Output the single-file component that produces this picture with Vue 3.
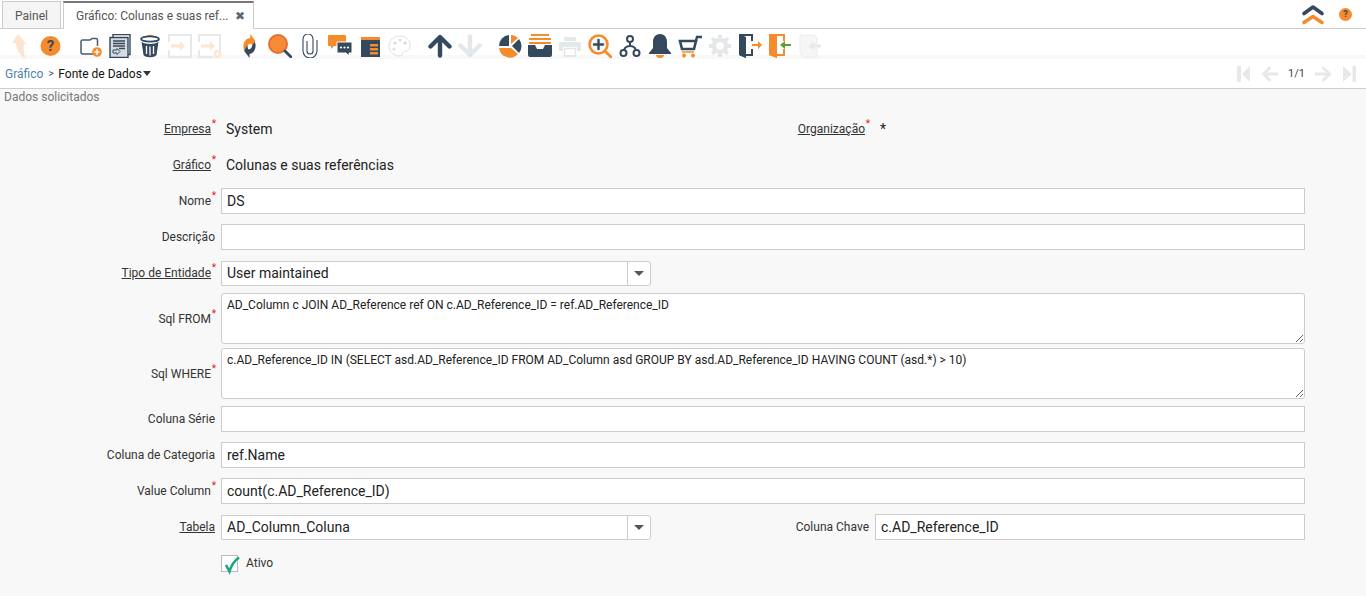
<script setup>
const dk = '#34495e'
const or = '#f68b2c'
const sqlFrom = 'AD_Column c JOIN AD_Reference ref ON c.AD_Reference_ID = ref.AD_Reference_ID'
const sqlWhere = 'c.AD_Reference_ID IN (SELECT asd.AD_Reference_ID FROM AD_Column asd GROUP BY asd.AD_Reference_ID HAVING COUNT (asd.*) > 10)'
const rows = [
  { label: 'Nome', req: true, value: 'DS' },
  { label: 'Descrição', value: '' },
]
const rows2 = [
  { label: 'Coluna Série', value: '' },
  { label: 'Coluna de Categoria', value: 'ref.Name' },
  { label: 'Value Column', req: true, value: 'count(c.AD_Reference_ID)' },
]
</script>

<template>
  <div class="page">
    <header class="tabs">
      <div class="tab">Painel</div>
      <div class="tab active">Gráfico: Colunas e suas ref...<span class="close">✖</span></div>
      <div class="tabs-right">
        <svg width="24" height="21" viewBox="0 0 24 21"><path d="M3 9.500 12 3l9 6.500" fill="none" stroke="#34495e" stroke-width="3.600" stroke-linecap="round" stroke-linejoin="round"/><path d="M3 18.500 12 12.500l9 6" fill="none" stroke="#f68b2c" stroke-width="3.600" stroke-linecap="round" stroke-linejoin="round"/></svg>
        <span class="mini-help">?</span>
      </div>
    </header>
    <div class="toolbar">
      <div class="tgroup">
        <span class="ti off"><svg viewBox="0 0 24 24"><path d="M10 0 4 9h4c0 6 3 11 9 15-1-5-2-10-1-14l3 1z" :fill="or"/></svg></span>
        <span class="ti"><svg viewBox="0 0 24 24"><circle cx="12.500" cy="12" r="10" :fill="or"/><text x="12.500" y="17" text-anchor="middle" class="qmark">?</text></svg></span>
      </div>
      <div class="tgroup">
        <span class="ti"><svg viewBox="0 0 24 24"><path d="M15 20H4.500A1.500 1.500 0 0 1 3 18.500V7.500A1.500 1.500 0 0 1 4.500 6H12l2-1.500h4a1.500 1.500 0 0 1 1.500 1.500V12" fill="none" stroke="#4a5a6c" stroke-width="1.500"/><circle cx="19" cy="18" r="4.800" :fill="or"/><path d="M16.300 18h5.400M19 15.300v5.400" stroke="#fff" stroke-width="1.500"/></svg></span>
        <span class="ti"><svg viewBox="0 0 24 24"><path d="M5 .5h17v20H5z" fill="#fff" :stroke="dk" stroke-width="1.400"/><path d="M2 3.500h18v20H2z" fill="#d8dbde" :stroke="dk" stroke-width="1.400"/><path d="M5 7h12M5 9.500h12M5 12h12M11 14.500h6" :stroke="dk" stroke-width="1.300"/><path d="M5 16h4v-1.500l3 3-3 3V19H5z" fill="none" :stroke="dk"/></svg></span>
        <span class="ti"><svg viewBox="0 0 24 24"><path d="M8.500 4c0-3 7-3 7 0" fill="none" :stroke="or" stroke-width="1.800"/><ellipse cx="12" cy="5" rx="9" ry="2.600" fill="#fff" :stroke="dk" stroke-width="1.800"/><path d="M3.500 8l2 13c2 3 11 3 13 0l2-13c-4 2.500-13 2.500-17 0z" :fill="dk"/><path d="M8.500 12v8M12 12.500v9M15.500 12v8" stroke="#fff" stroke-width="1.300"/></svg></span>
        <span class="ti"><svg viewBox="0 0 24 24"><path d="M1 8V1h22v22H1v-7" fill="none" stroke="#e6e8ea" stroke-width="2"/><path d="M3 10.500h9V7l5 5-5 5v-3.500H3z" fill="#fde6d2"/></svg></span>
        <span class="ti"><svg viewBox="0 0 24 24"><path d="M1 8V1h21v16M15 23H1v-7" fill="none" stroke="#e6e8ea" stroke-width="2"/><path d="M3 10.500h9V7l5 5-5 5v-3.500H3z" fill="#fde6d2"/><circle cx="19.500" cy="20" r="4" fill="#fde6d2"/><path d="M17.500 20h4M19.500 18v4" stroke="#fff"/></svg></span>
      </div>
      <div class="tgroup">
        <span class="ti"><svg viewBox="0 0 24 24"><g transform="translate(2.500 0) scale(.75 1)"><path d="M4 14C3 7 9 4 13 4V0l7 7-4 7-1-4c-3-1-6 1-7 4l-3 4z" :fill="or"/><path d="M20 10c1 7-5 10-8 10v4l-7-7 4-6 1 4c3 1 5-1 6-4l3-3z" :fill="dk"/></g></svg></span>
        <span class="ti"><svg viewBox="0 0 24 24"><circle cx="10" cy="10" r="9" fill="#f68b3a" stroke="#e5702c" stroke-width="2"/><path d="M17 17l6 6" :stroke="dk" stroke-width="2.800" stroke-linecap="round"/></svg></span>
        <span class="ti"><svg viewBox="0 0 24 24"><path d="M19 6v11a7 7 0 0 1-14 0V5a5 5 0 0 1 10 0v12a3 3 0 0 1-6 0V7" fill="#fff" :stroke="dk" stroke-width="1.100"/></svg></span>
        <span class="ti"><svg viewBox="0 0 24 24"><path d="M0 2a1 1 0 0 1 1-1h16a1 1 0 0 1 1 1v9a1 1 0 0 1-1 1H6l-3 3v-3H1a1 1 0 0 1-1-1z" :fill="or"/><path d="M9 8h15v11h-3v3l-3-3H9z" :fill="dk" stroke="#fff"/><circle cx="13" cy="13.500" r="1.100" fill="#fff"/><circle cx="16.500" cy="13.500" r="1.100" fill="#fff"/><circle cx="20" cy="13.500" r="1.100" fill="#fff"/></svg></span>
        <span class="ti"><svg viewBox="0 0 24 24"><path d="M3 5h19v18H3z" :fill="dk"/><path d="M3 3h19v3H3z" :fill="or"/><path d="M12 10h8v2.500h-8zM12 14h8v2.500h-8zM12 18h8v2.500h-8z" :fill="or"/></svg></span>
        <span class="ti off3"><svg viewBox="0 0 24 24"><path d="M12 2C5 2 1 7 1 12s4 10 11 10c3 0 2-3 3-4s6 0 7-5c1-6-4-11-10-11z" fill="#fff" stroke="#c8ccd0"/><circle cx="7" cy="9" r="1.500" fill="#c8b8a8"/><circle cx="12" cy="6" r="1.500" fill="#c8ccd0"/><circle cx="17" cy="9" r="1.500" fill="#c8b8a8"/><circle cx="6" cy="15" r="1.500" fill="#c8ccd0"/></svg></span>
      </div>
      <div class="tgroup">
        <span class="ti"><svg viewBox="0 0 24 24"><path d="M12 21.500V4M2.500 12.500 12 3l9.500 9.500" fill="none" :stroke="dk" stroke-width="4.400" stroke-linecap="round" stroke-linejoin="round"/></svg></span>
        <span class="ti off4"><svg viewBox="0 0 24 24"><path d="M12 2.500V20M2.500 11.500 12 21l9.500-9.500" fill="none" :stroke="dk" stroke-width="4.400" stroke-linecap="round" stroke-linejoin="round"/></svg></span>
      </div>
      <div class="tgroup">
        <span class="ti"><svg viewBox="0 0 24 24"><path d="M11 1A11 11 0 0 0 1 12h10z" :fill="dk"/><path d="M13 1v9l7-6a11 11 0 0 0-7-3z" :fill="or"/><path d="M21 5l-7 7 7 7a11 11 0 0 0 0-14z" :fill="dk"/><path d="M1 14a11 11 0 0 0 19 6l-7-6z" :fill="or"/></svg></span>
        <span class="ti"><svg viewBox="0 0 24 24"><path d="M3 0h18v2H3zM1 4h22v2H1z" :fill="or"/><path d="M1 8h22v2H1z" :fill="or"/><path d="M0 11h7l2 4h6l2-4h7v10a2 2 0 0 1-2 2H2a2 2 0 0 1-2-2z" :fill="dk"/></svg></span>
        <span class="ti off4"><svg viewBox="0 0 24 24"><path d="M6 3h12v4H6zM2 8h20a1 1 0 0 1 1 1v8h-4v-4H5v4H1V9a1 1 0 0 1 1-1z" :fill="dk"/><path d="M6.500 14.500h11V22h-11z" fill="none" :stroke="dk" stroke-width="1.500"/></svg></span>
        <span class="ti"><svg viewBox="0 0 24 24"><circle cx="10.500" cy="10.500" r="9" fill="#f5f6f7" :stroke="or" stroke-width="2.600"/><path d="M6 10.500h9M10.500 6v9" :stroke="dk" stroke-width="2.400" stroke-linecap="round"/><path d="M17 17l6 6" :stroke="or" stroke-width="2.800" stroke-linecap="round"/></svg></span>
        <span class="ti"><svg viewBox="0 0 24 24"><g fill="none" :stroke="dk" stroke-width="2"><circle cx="12" cy="5" r="3"/><circle cx="5.500" cy="19" r="3"/><circle cx="18.500" cy="19" r="3"/><path d="M12 8v4M12 12c-3 0-5 1.500-6 4M12 12c3 0 5 1.500 6 4"/></g></svg></span>
        <span class="ti"><svg viewBox="0 0 24 24"><path d="M12 0c-5 0-7 4-7 8v6l-4 5v1h22v-1l-4-5V8c0-4-2-8-7-8z" :fill="dk"/><path d="M8 21h8a4 3 0 0 1-8 0z" :fill="or"/></svg></span>
        <span class="ti"><svg viewBox="0 0 24 24"><path d="M2 7h16l-2 8H4z" fill="none" :stroke="dk" stroke-width="2.600"/><path d="M17.500 8l1.500-5h5" fill="none" :stroke="dk" stroke-width="2.400"/><path d="M4 18h12" :stroke="or" stroke-width="1.500"/><circle cx="6" cy="21.500" r="2" :fill="or"/><circle cx="15" cy="21.500" r="2" :fill="or"/></svg></span>
        <span class="ti off4"><svg viewBox="0 0 24 24"><circle cx="12" cy="12" r="6" fill="none" :stroke="dk" stroke-width="4.500"/><path d="M12 1v5M12 18v5M1 12h5M18 12h5M4.200 4.200l3.500 3.500M16.300 16.300l3.500 3.500M4.200 19.800l3.500-3.500M16.300 7.700l3.500-3.500" :stroke="dk" stroke-width="4"/></svg></span>
        <span class="ti"><svg viewBox="0 0 24 24"><path d="M1 0h14v7h-2V2H6v18h7v-5h2v7H8v2l-7-3z" :fill="dk"/><path d="M1 0l7 3v21l-7-3z" :fill="dk"/><path d="M14 10h6V7l4 4-4 4v-3h-6z" :fill="or"/></svg></span>
        <span class="ti"><svg viewBox="0 0 24 24"><path d="M1 0h16v7h-2V2H9v18h6v-5h2v7H9v2l-8-3z" :fill="or"/><path d="M1 0l8 3v21l-8-3z" :fill="or"/><path d="M23 10h-6V7l-5 4 5 4v-3h6z" fill="#5aa02c"/></svg></span>
        <span class="ti"><svg viewBox="0 0 24 24"><path d="M2 1h14l3 3v6h-7v4h7v9H6l-4-4z" fill="#f6f6f6" stroke="#ececec"/><path d="M23 10.500h-7V8l-5 4 5 4v-2.500h7z" fill="#e6e8ea"/></svg></span>
      </div>
    </div>
    <div class="crumb">
      <a class="link">Gráfico</a>
      <span class="sep">&gt;</span>
      <span class="cur">Fonte de Dados</span>
      <span class="caret"></span>
      <div class="pager">
        <svg width="13" height="18" viewBox="0 0 13 18"><path d="M0 1h4v16H0zM13 1v16L5 9z" fill="#e6e8ea"/></svg>
        <svg class="gap-a" width="17" height="18" viewBox="0 0 17 18"><path d="M17 9H3M9.500 2 2.500 9l7 7" fill="none" stroke="#e6e8ea" stroke-width="3"/></svg>
        <span class="count">1/1</span>
        <svg width="17" height="18" viewBox="0 0 17 18"><path d="M0 9h14M7.500 2l7 7-7 7" fill="none" stroke="#e6e8ea" stroke-width="3"/></svg>
        <svg class="gap-a" width="13" height="18" viewBox="0 0 13 18"><path d="M0 1v16l9-8zM9.500 1H13v16H9.500z" fill="#e6e8ea"/></svg>
      </div>
    </div>
    <div class="status">Dados solicitados</div>
    <main class="form">
      <label class="lbl u req">Empresa<i>*</i></label>
      <div class="val">System</div>
      <label class="lbl u req">Organização<i>*</i></label>
      <div class="val">*</div>

      <label class="lbl u req">Gráfico<i>*</i></label>
      <div class="val wide">Colunas e suas referências</div>

      <template v-for="r in rows" :key="r.label">
        <label class="lbl" :class="{ req: r.req }">{{ r.label }}<i v-if="r.req">*</i></label>
        <input class="inp wide" :value="r.value" />
      </template>

      <label class="lbl u req">Tipo de Entidade<i>*</i></label>
      <div class="combo"><span>User maintained</span><b></b></div>
      <span class="rest"></span>

      <label class="lbl req">Sql FROM<i>*</i></label>
      <textarea class="area wide" :value="sqlFrom"></textarea>

      <label class="lbl req">Sql WHERE<i>*</i></label>
      <textarea class="area wide" :value="sqlWhere"></textarea>

      <template v-for="r in rows2" :key="r.label">
        <label class="lbl" :class="{ req: r.req }">{{ r.label }}<i v-if="r.req">*</i></label>
        <input class="inp wide" :value="r.value" />
      </template>

      <label class="lbl u">Tabela</label>
      <div class="combo"><span>AD_Column_Coluna</span><b></b></div>
      <label class="lbl">Coluna Chave</label>
      <input class="inp" value="c.AD_Reference_ID" />

      <span></span>
      <div class="check">
        <span class="box"><svg width="18" height="18" viewBox="0 0 18 18"><path d="M4 9l3.500 6.500C9 10 12 5 17 1.500" fill="none" stroke="#1aa583" stroke-width="2.600"/></svg></span>
        <span>Ativo</span>
      </div>
    </main>
  </div>
</template>

<style>
html, body { margin: 0; background: #f8f8f8; }
</style>

<style scoped>
.page { width: 1366px; height: 596px; overflow: hidden; background: #f8f8f8; font-family: Roboto, sans-serif; color: #333; }
.tabs { height: 28px; background: #fff; border-bottom: 1px solid #ccc; display: flex; align-items: flex-end; padding-left: 2px; gap: 2px; }
.tab { height: 26px; width: 57px; border: 1px solid #ccc; border-bottom: 0; background: #f5f5f5; font-size: 12px; line-height: 29px; text-align: center; color: #555; }
.tab.active { box-sizing: border-box; width: 191px; height: 28px; margin-bottom: -1px; padding-left: 12px; background: #fff; border-top: 2px solid #777; line-height: 27px; text-align: left; }
.close { font-size: 12px; margin-left: 6px; color: #5a6673; }
.tabs-right { margin-left: auto; display: flex; align-items: center; gap: 14px; padding-right: 14px; align-self: center; }
.mini-help { width: 13px; height: 13px; border-radius: 50%; background: #f68b2c; color: #34495e; font-size: 9px; font-weight: 700; text-align: center; line-height: 13px; }
.toolbar { height: 30px; display: flex; gap: 10px; padding-left: 5px; background: linear-gradient(#fff 0 26px, #f8f8f8 26px); }
.tgroup { display: flex; }
.ti { width: 30px; height: 30px; padding-top: 5px; box-sizing: border-box; display: flex; justify-content: center; }
.ti svg { width: 24px; height: 24px; display: block; }
.off { opacity: .22; }
.off3 { opacity: .6; }
.off4 { opacity: .12; }
.qmark { font: 700 15px Roboto, sans-serif; fill: #34495e; }
.crumb { height: 29px; background: #fff; border-bottom: 1px solid #ccc; display: flex; align-items: center; padding-left: 5px; font-size: 12px; }
.link { color: #4a83a8; }
.sep { margin: 0 5px; font-size: 11px; color: #555; width: 5px; }
.cur { color: #111; }
.caret { width: 0; height: 0; border: 4.500px solid transparent; border-top: 5px solid #333; border-bottom: 0; margin-left: 1px; }
.pager { margin-left: auto; display: flex; align-items: center; gap: 10px; padding-right: 10px; }
.gap-a { margin-left: 1px; }
.count { font-size: 11px; color: #444; }
.status { height: 22px; line-height: 16px; padding-left: 4px; font-size: 12px; color: #777; }
.form { display: grid; grid-template-columns: 215px 430px 212px 430px; grid-template-rows: repeat(5, 36px) 55px 55px repeat(5, 36px); column-gap: 6px; align-items: center; }
.lbl { justify-self: end; position: relative; font-size: 12px; color: #333; white-space: nowrap; }
.lbl.u { text-decoration: underline; }
.lbl.req { padding-right: 4px; }
.lbl i { position: absolute; right: -1px; top: -3px; color: #e02020; font-style: normal; font-size: 10px; line-height: 1; }
.val { font-size: 14px; color: #222; padding-left: 5px; }
.wide { grid-column: 2 / 5; }
.inp { box-sizing: border-box; width: 100%; height: 26px; border: 1px solid #ccc; background: #fff; padding: 0 5px; font: 14px Roboto, sans-serif; color: #222; outline: 0; }
.area { box-sizing: border-box; display: block; width: 100%; height: 51px; border: 1px solid #ccc; border-radius: 3px; background: #fff; padding: 3px 5px; font: 12px/1.400 Roboto, sans-serif; color: #222; outline: 0; resize: vertical; }
.combo { box-sizing: border-box; height: 25px; border: 1px solid #ccc; border-radius: 0 3px 3px 0; background: #fff; display: flex; align-items: center; padding-left: 5px; font-size: 14px; color: #222; }
.combo span { flex: 1; }
.combo b { width: 22px; height: 100%; border-left: 1px solid #ccc; display: flex; align-items: center; justify-content: center; }
.combo b::after { content: ""; border: 5px solid transparent; border-top: 5px solid #555; border-bottom: 0; }
.rest { grid-column: 3 / 5; }
.check { display: flex; align-items: center; gap: 8px; font-size: 12px; color: #333; }
.box { box-sizing: border-box; width: 17px; height: 17px; border: 1px solid #bbb; background: #fff; display: block; }
.box svg { display: block; overflow: visible; }
</style>
